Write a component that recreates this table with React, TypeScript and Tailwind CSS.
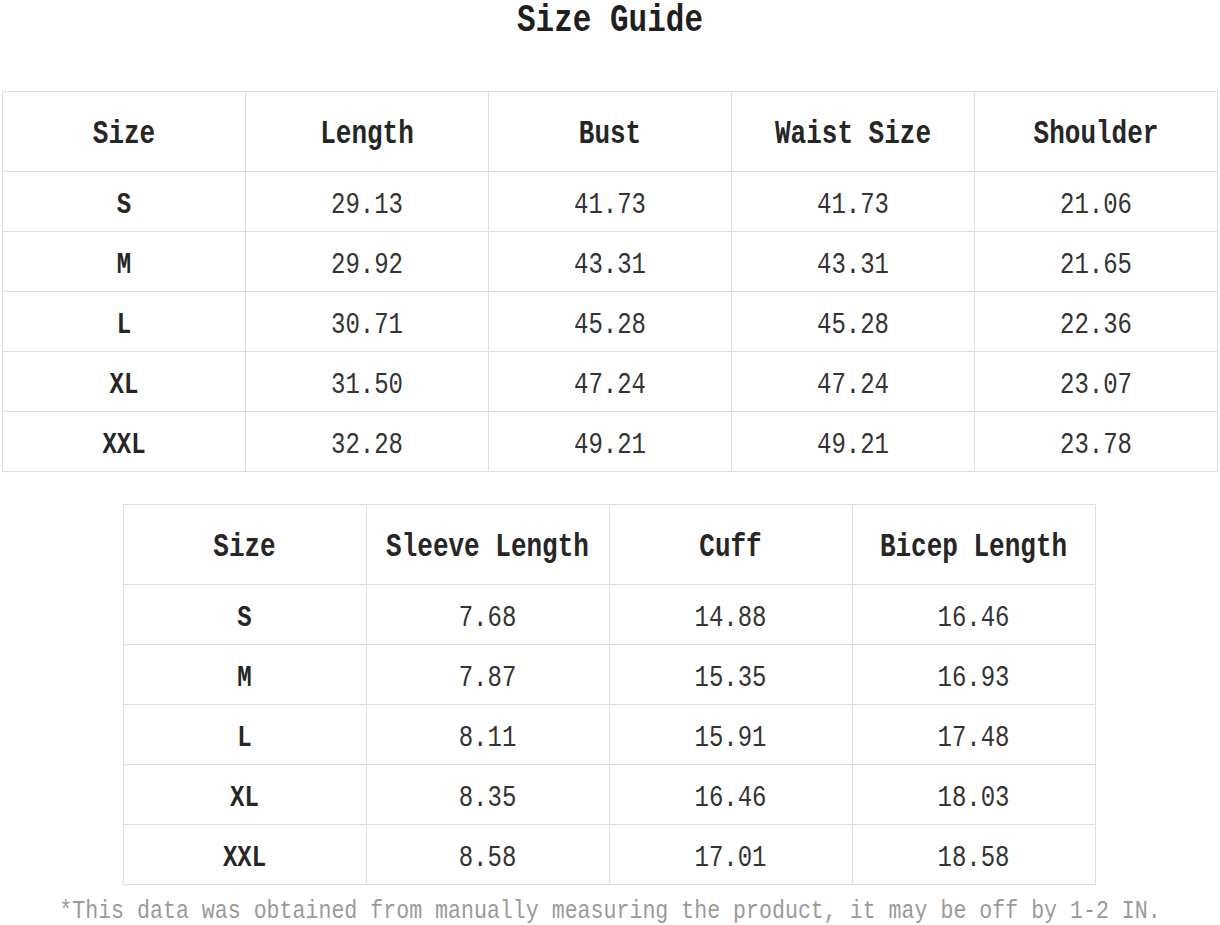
import React from 'react';

const mono = "font-['Liberation_Mono','DejaVu_Sans_Mono',monospace]";

const tableOne = {
  head: ['Size', 'Length', 'Bust', 'Waist Size', 'Shoulder'],
  rows: [
    ['S', '29.13', '41.73', '41.73', '21.06'],
    ['M', '29.92', '43.31', '43.31', '21.65'],
    ['L', '30.71', '45.28', '45.28', '22.36'],
    ['XL', '31.50', '47.24', '47.24', '23.07'],
    ['XXL', '32.28', '49.21', '49.21', '23.78'],
  ],
};

const tableTwo = {
  head: ['Size', 'Sleeve Length', 'Cuff', 'Bicep Length'],
  rows: [
    ['S', '7.68', '14.88', '16.46'],
    ['M', '7.87', '15.35', '16.93'],
    ['L', '8.11', '15.91', '17.48'],
    ['XL', '8.35', '16.46', '18.03'],
    ['XXL', '8.58', '17.01', '18.58'],
  ],
};

// the source font is taller than Courier-width mono, so stretch glyphs a bit
const Tall = ({ children }: { children: React.ReactNode }) => (
  <span className="inline-block scale-y-[1.25]">{children}</span>
);

const SizeTable = ({ head, rows }: { head: string[]; rows: string[][] }) => (
  <table className="w-full border-collapse table-fixed">
    <thead>
      <tr className="h-[80px]">
        {head.map((h, i) => (
          <th key={i} className="border border-[#dedede] pt-[6px] text-[26px] font-bold text-[#262626] text-center">
            <Tall>{h}</Tall>
          </th>
        ))}
      </tr>
    </thead>
    <tbody>
      {rows.map((row, r) => (
        <tr key={r} className="h-[60px]">
          {row.map((cell, c) => (
            <td
              key={c}
              className={`border border-[#dedede] pt-[6px] text-center text-[24px] ${c === 0 ? 'font-bold text-[#262626]' : 'text-[#333]'}`}
            >
              <Tall>{cell}</Tall>
            </td>
          ))}
        </tr>
      ))}
    </tbody>
  </table>
);

export default function App() {
  return (
    <div className={`w-[1220px] min-h-[925px] bg-white ${mono}`}>
      <div className="h-[91px] flex justify-center">
        <h1 className="text-[31px] font-bold leading-none pt-[5px] text-[#1f1f1f]">
          <Tall>Size Guide</Tall>
        </h1>
      </div>
      <div className="pl-[2px] pr-[2px]">
        <SizeTable {...tableOne} />
      </div>
      <div className="pt-[32px] flex justify-center">
        <div className="w-[973px] ml-[-2px]">
          <SizeTable {...tableTwo} />
        </div>
      </div>
      <p className="text-center text-[21.6px] text-[#9a9a9a] mt-[16px] leading-none">
        <span className="inline-block scale-y-[1.15]">
          *This data was obtained from manually measuring the product, it may be off by 1-2 IN.
        </span>
      </p>
    </div>
  );
}
